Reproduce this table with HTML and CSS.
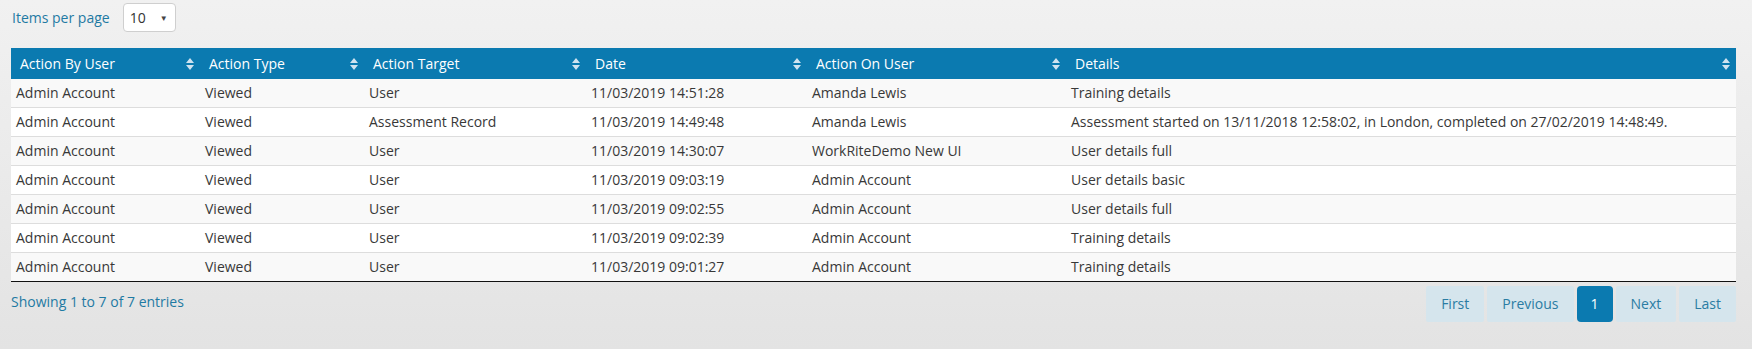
FILE: index.html
```html
<!DOCTYPE html>
<html>
<head>
<meta charset="utf-8">
<link rel="stylesheet" href="styles.css">
</head>
<body>
<div class="page">
  <div class="length-row">
    <span class="length-label">Items per page</span>
    <div class="select-box"><span>10</span><span class="caret">&#9660;</span></div>
  </div>
  <table class="grid">
    <colgroup>
      <col class="c1"><col class="c2"><col class="c3"><col class="c4"><col class="c5"><col class="c6">
    </colgroup>
    <thead>
      <tr>
        <th><div class="th-in"><span>Action By User</span><svg class="sort" viewBox="0 0 8 14" width="8" height="14"><path d="M0 6L4 1L8 6Z M0 8L8 8L4 13Z"/></svg></div></th>
        <th><div class="th-in"><span>Action Type</span><svg class="sort" viewBox="0 0 8 14" width="8" height="14"><path d="M0 6L4 1L8 6Z M0 8L8 8L4 13Z"/></svg></div></th>
        <th><div class="th-in"><span>Action Target</span><svg class="sort" viewBox="0 0 8 14" width="8" height="14"><path d="M0 6L4 1L8 6Z M0 8L8 8L4 13Z"/></svg></div></th>
        <th><div class="th-in"><span>Date</span><svg class="sort" viewBox="0 0 8 14" width="8" height="14"><path d="M0 6L4 1L8 6Z M0 8L8 8L4 13Z"/></svg></div></th>
        <th><div class="th-in"><span>Action On User</span><svg class="sort" viewBox="0 0 8 14" width="8" height="14"><path d="M0 6L4 1L8 6Z M0 8L8 8L4 13Z"/></svg></div></th>
        <th><div class="th-in"><span>Details</span><svg class="sort" viewBox="0 0 8 14" width="8" height="14"><path d="M0 6L4 1L8 6Z M0 8L8 8L4 13Z"/></svg></div></th>
      </tr>
    </thead>
    <tbody>
      <tr><td>Admin Account</td><td>Viewed</td><td>User</td><td>11/03/2019 14:51:28</td><td>Amanda Lewis</td><td>Training details</td></tr>
      <tr><td>Admin Account</td><td>Viewed</td><td>Assessment Record</td><td>11/03/2019 14:49:48</td><td>Amanda Lewis</td><td>Assessment started on 13/11/2018 12:58:02, in London, completed on 27/02/2019 14:48:49.</td></tr>
      <tr><td>Admin Account</td><td>Viewed</td><td>User</td><td>11/03/2019 14:30:07</td><td>WorkRiteDemo New UI</td><td>User details full</td></tr>
      <tr><td>Admin Account</td><td>Viewed</td><td>User</td><td>11/03/2019 09:03:19</td><td>Admin Account</td><td>User details basic</td></tr>
      <tr><td>Admin Account</td><td>Viewed</td><td>User</td><td>11/03/2019 09:02:55</td><td>Admin Account</td><td>User details full</td></tr>
      <tr><td>Admin Account</td><td>Viewed</td><td>User</td><td>11/03/2019 09:02:39</td><td>Admin Account</td><td>Training details</td></tr>
      <tr><td>Admin Account</td><td>Viewed</td><td>User</td><td>11/03/2019 09:01:27</td><td>Admin Account</td><td>Training details</td></tr>
    </tbody>
  </table>
  <div class="footer">
    <div class="info">Showing 1 to 7 of 7 entries</div>
    <div class="pager">
      <span class="pbtn">First</span>
      <span class="pbtn">Previous</span>
      <span class="pbtn active">1</span>
      <span class="pbtn">Next</span>
      <span class="pbtn">Last</span>
    </div>
  </div>
</div>
</body>
</html>
```

FILE: styles.css
```css
html, body {
  margin: 0;
  padding: 0;
}
body {
  font-family: "Open Sans", "Liberation Sans", sans-serif;
  font-size: 14px;
  color: #383838;
  background: linear-gradient(to bottom, #f1f1f1 0%, #e3e3e3 100%);
  min-height: 349px;
}
.page {
  padding: 3px 16px 0 11px;
}
.length-row {
  display: flex;
  align-items: center;
  height: 29px;
  gap: 13px;
}
.length-label {
  color: #1f7aa3;
  padding-left: 1px;
}
.select-box {
  box-sizing: border-box;
  width: 53px;
  height: 29px;
  background: #fff;
  border: 1px solid #cfcfcf;
  border-radius: 4px;
  display: flex;
  align-items: center;
  justify-content: space-between;
  padding: 0 7px 0 6px;
  color: #333;
}
.caret {
  font-size: 8px;
  color: #444;
}
.grid {
  margin-top: 16px;
  width: 1725px;
  border-collapse: collapse;
  table-layout: fixed;
}
.c1 { width: 189px; }
.c2 { width: 164px; }
.c3 { width: 222px; }
.c4 { width: 221px; }
.c5 { width: 259px; }
.c6 { width: 670px; }
.grid th {
  background: #0b7ab0;
  color: #fff;
  font-weight: normal;
  text-align: left;
  height: 31px;
  padding: 0 6px 0 9px;
}
.th-in {
  display: flex;
  align-items: center;
  justify-content: space-between;
}
.sort {
  fill: #cfe3f0;
  flex: none;
}
.grid td {
  height: 27px;
  padding: 0 5px 1px;
  border-bottom: 1px solid #dddddd;
  white-space: nowrap;
  overflow: hidden;
}
.grid tbody tr:nth-child(odd) td {
  background: #f9f9f9;
}
.grid tbody tr:nth-child(even) td {
  background: #ffffff;
}
.grid tbody tr:last-child td {
  border-bottom: 1px solid #111;
}
.footer {
  display: flex;
  justify-content: space-between;
  align-items: flex-start;
  margin-top: 4px;
}
.info {
  color: #1f7aa3;
  padding-top: 6px;
  line-height: 20px;
}
.pager {
  display: flex;
  gap: 3px;
}
.pbtn {
  height: 36px;
  line-height: 36px;
  padding: 0 15px;
  background: #d5e5ed;
  color: #2a7ca3;
  border-radius: 2px;
}
.pbtn.active {
  padding: 0 14px;
  background: #0b7ab0;
  color: #fff;
  border-radius: 4px;
}
```
